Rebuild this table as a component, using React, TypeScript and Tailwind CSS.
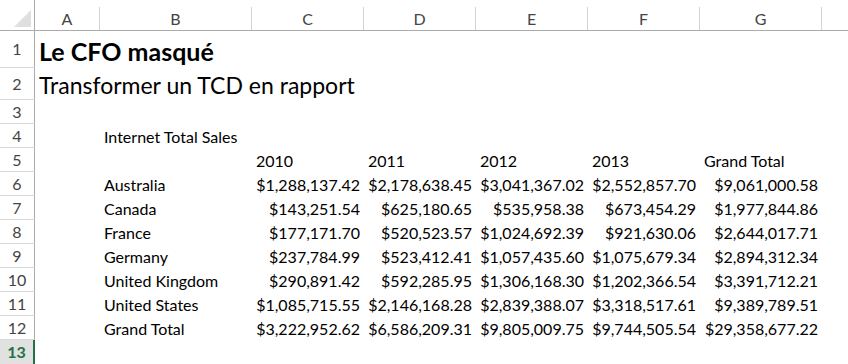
import React from "react";

const cols = ["A", "B", "C", "D", "E", "F", "G"];

// colonnes C..G : montants
const data: [string, string[]][] = [
	["Australia", ["$1,288,137.42", "$2,178,638.45", "$3,041,367.02", "$2,552,857.70", "$9,061,000.58"]],
	["Canada", ["$143,251.54", "$625,180.65", "$535,958.38", "$673,454.29", "$1,977,844.86"]],
	["France", ["$177,171.70", "$520,523.57", "$1,024,692.39", "$921,630.06", "$2,644,017.71"]],
	["Germany", ["$237,784.99", "$523,412.41", "$1,057,435.60", "$1,075,679.34", "$2,894,312.34"]],
	["United Kingdom", ["$290,891.42", "$592,285.95", "$1,306,168.30", "$1,202,366.54", "$3,391,712.21"]],
	["United States", ["$1,085,715.55", "$2,146,168.28", "$2,839,388.07", "$3,318,517.61", "$9,389,789.51"]],
	["Grand Total", ["$3,222,952.62", "$6,586,209.31", "$9,805,009.75", "$9,744,505.54", "$29,358,677.22"]],
];

function RowHead({ n, h, selected }: { n: number; h: string; selected?: boolean }) {
	return (
		<div
			className={
				selected
					? `${h} flex items-center justify-center bg-[#e1e1e1] border-r-2 border-r-[#217346] text-[#217346] font-bold text-[16px]`
					: `${h} flex items-center justify-center border-b border-b-[#dadada] border-r border-r-[#ababab] text-[#444] text-[16px]`
			}
		>
			{n}
		</div>
	);
}

function Cell({ children, right, className = "" }: { children?: React.ReactNode; right?: boolean; className?: string }) {
	return (
		<div className={`flex items-end leading-none pb-[3px] px-[4px] whitespace-nowrap ${right ? "justify-end" : ""} ${className}`}>
			{children}
		</div>
	);
}

export default function App() {
	return (
		<div className="w-[848px] h-[364px] overflow-hidden bg-white text-black font-['Lato','Liberation_Sans',sans-serif] text-[16px]">
			{/* en-têtes de colonnes */}
			<div className="flex h-[31px] border-b border-b-[#ababab]">
				<div className="w-[35px] shrink-0 border-r border-r-[#ababab] flex items-end justify-end pr-[3px] pb-[3px]">
					<svg width="17" height="17" viewBox="0 0 17 17">
						<polygon points="17,0 17,17 0,17" fill="#dfdfdf" />
					</svg>
				</div>
				{cols.map((c, i) => (
					<div
						key={c}
						className={`${["w-[65px]", "w-[152px]", "w-[112px]", "w-[112px]", "w-[112px]", "w-[112px]", "w-[122px]"][i]} shrink-0 mt-[7px] border-r border-r-[#d4d4d4] flex items-center justify-center text-[#444] text-[16px]`}
					>
						{c}
					</div>
				))}
				<div className="flex-1 mt-[7px]" />
			</div>

			<div className="grid grid-cols-[35px_65px_152px_112px_112px_112px_112px_122px_1fr] grid-rows-[37px_32px_repeat(11,24px)]">
				<RowHead n={1} h="h-[37px]" />
				<Cell className="col-span-8 text-[25px] font-bold !pb-[4px]">Le CFO masqué</Cell>

				<RowHead n={2} h="h-[32px]" />
				<Cell className="col-span-8 text-[23px] !pb-[3px]">Transformer un TCD en rapport</Cell>

				<RowHead n={3} h="h-[24px]" />
				<div className="col-span-8" />

				<RowHead n={4} h="h-[24px]" />
				<div />
				<Cell className="col-span-7">Internet Total Sales</Cell>

				<RowHead n={5} h="h-[24px]" />
				<div />
				<div />
				<Cell>2010</Cell>
				<Cell>2011</Cell>
				<Cell>2012</Cell>
				<Cell>2013</Cell>
				<Cell>Grand Total</Cell>
				<div />

				{data.map(([name, vals], i) => (
					<React.Fragment key={name}>
						<RowHead n={6 + i} h="h-[24px]" />
						<div />
						<Cell>{name}</Cell>
						{vals.map((v, j) => (
							<Cell key={j} right>
								{v}
							</Cell>
						))}
						<div />
					</React.Fragment>
				))}

				<RowHead n={13} h="h-[24px]" selected />
				<div className="col-span-8" />
			</div>
		</div>
	);
}
